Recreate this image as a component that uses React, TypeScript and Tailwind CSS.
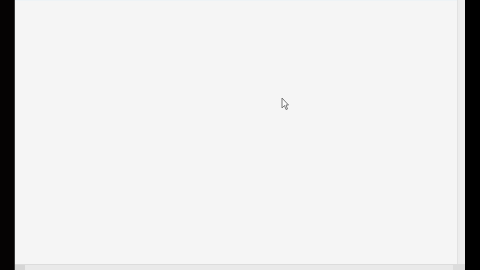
export default function App() {
  return (
    <div className="w-[480px] h-[270px] bg-black flex overflow-hidden" style={{ fontFamily: '"Liberation Sans", sans-serif' }}>
      <div className="w-[14px] shrink-0 bg-[#050303]" />
      <div className="w-[1px] shrink-0 bg-[#3a3a3a]" />
      <div className="flex flex-col w-[450px] shrink-0">
        <div className="flex flex-1">
          <div className="relative flex-1 bg-[#f5f5f5] border-t border-[#eef3f6]">
            <svg className="absolute left-[266px] top-[96px]" width="8" height="14" viewBox="0 0 8 14">
              <path d="M1 1 L1 11 L3.5 8.5 L5 12.5 L6.5 12 L5 8 L7.5 8 Z" fill="#fafafa" stroke="#6a6a6a" strokeWidth="0.9" />
            </svg>
          </div>
          <div className="w-[8px] shrink-0 bg-[#ececec] border-l border-[#e2e2e2]" />
        </div>
        <div className="h-[6px] shrink-0 bg-[#e9e9e9] border-t border-[#dcdcdc] flex">
          <div className="w-[10px] bg-[#d6d6d6]" />
          <div className="flex-1" />
          <div className="w-[12px] bg-[#dcdcdc]" />
        </div>
      </div>
      <div className="flex-1 bg-black" />
    </div>
  );
}
